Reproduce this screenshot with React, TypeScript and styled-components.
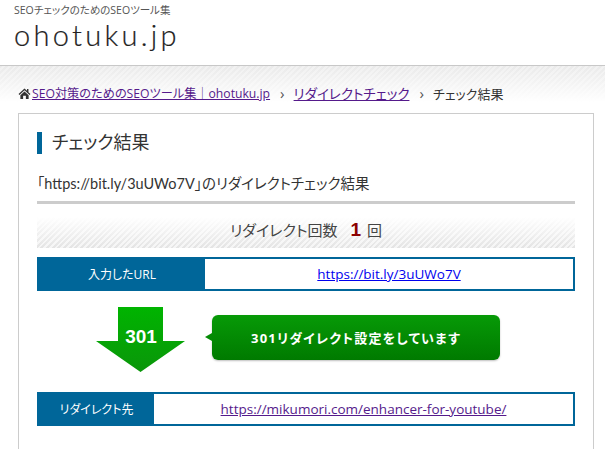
import React from "react";
import styled, { createGlobalStyle } from "styled-components";

const Global = createGlobalStyle`
  html, body { margin: 0; padding: 0; background: #fff; }
  body {
    font-family: "Open Sans", "Noto Sans CJK JP", sans-serif; color: #333; overflow: hidden;
    font-feature-settings: "palt";
  }
  a { color: #551a8b; }
`;
const Page = styled.div`width: 605px; height: 449px; overflow: hidden;`;
const Header = styled.header`
  height: 66px; box-sizing: border-box; padding: 3px 0 0 14px;
  border-bottom: 1px solid #c8c8c8;
`;
const Tagline = styled.div`font-size: 10.5px; line-height: 14px; color: #555;`;
const Logo = styled.div`
  font-family: Lato, sans-serif; font-weight: 300; font-size: 29px; line-height: 34px;
  letter-spacing: 3.3px; color: #222; margin-top: 1px; -webkit-text-stroke: 0.2px #222;
`;
const Main = styled.main`
  height: 383px; box-sizing: border-box; padding: 15px 11px 0 18px;
  background:
    linear-gradient(to bottom, rgba(255,255,255,0) 0, #fff 36px),
    repeating-linear-gradient(135deg, #eaeaea 0 2px, #f1f1f1 2px 4px);
  background-repeat: no-repeat; background-size: 100% 40px;
`;
const Crumbs = styled.nav`
  display: flex; align-items: center; height: 24px; color: #333; white-space: nowrap;
`;
const CrumbLink = styled.a<{ $size: number; $gap?: number }>`
  font-size: ${p => p.$size}px; margin-left: ${p => p.$gap ?? 0}px;
`;
const CrumbCurrent = styled.span`font-size: 13px;`;
const Sep = styled.span`margin: 0 9px 0 10px; color: #555; font-size: 15px; line-height: 15px;`;
const Card = styled.section`
  margin-top: 8px; border: 1px solid #ccc; background: #fff; height: 340px;
  box-sizing: border-box; padding: 18px 18px 0 18px;
`;
const Title = styled.h2`
  margin: 0; height: 22px; line-height: 21px; border-left: 5px solid #006699; padding-left: 10px;
  font-size: 18px; font-weight: 400; color: #333;
`;
const Lead = styled.p`
  margin: 21px 0 0; height: 26px; line-height: 18px; font-family: Lato, "Noto Sans CJK JP", sans-serif;
  font-size: 14.5px; color: #333; border-bottom: 3px solid #ccc;
`;
const Count = styled.div`
  margin-top: 13px; height: 31px; box-sizing: border-box; padding-bottom: 6px;
  display: flex; align-items: center; justify-content: center;
  font-size: 15px; color: #444;
  background:
    linear-gradient(to bottom, #fff, rgba(255,255,255,0)),
    repeating-linear-gradient(135deg, #e4e4e4 0 2px, #f5f5f5 2px 4px);
`;
const CountNum = styled.strong`color: #8b0000; font-size: 19px; margin: 0 6px 0 13px; font-family: "Liberation Sans", sans-serif;`;
const UrlRow = styled.div`
  margin-top: 9px; display: flex; height: 34px; box-sizing: border-box; border: 2px solid #006699;
`;
const UrlLabel = styled.div<{ $w: number }>`
  width: ${p => p.$w}px; flex: none; background: #006699; color: #fff; font-size: 12px;
  display: flex; align-items: center; justify-content: center;
`;
const UrlValue = styled.div`flex: 1; display: flex; align-items: center; justify-content: center; font-size: 13.5px;`;
const BlueLink = styled.a`color: #0000ee;`;
const Flow = styled.div`display: flex; align-items: flex-start; height: 92px; padding-left: 58px;`;
const ArrowBox = styled.div`position: relative; width: 92px; height: 67px; margin-top: 15px; flex: none;`;
const ArrowCode = styled.span`
  position: absolute; left: 0; right: 0; top: 20px; text-align: center; color: #fff;
  font-family: "Liberation Sans", sans-serif; font-weight: 700; font-size: 19px; line-height: 22px;
`;
const Bubble = styled.div`
  position: relative; margin: 24px 0 0 25px; width: 288px; height: 45px; border-radius: 6px;
  background: linear-gradient(to bottom, #079a07, #007a00); color: #fff;
  box-shadow: 0 1px 2px rgba(0,0,0,.25);
  display: flex; align-items: center; justify-content: center; font-weight: 700; font-size: 13px; letter-spacing: 1.2px;
  &::before {
    content: ""; position: absolute; left: -7px; top: 18px;
    border-style: solid; border-width: 4px 7px 4px 0; border-color: transparent #058a05 transparent transparent;
  }
`;

export default function App() {
  return (
    <Page>
      <Global />
      <Header>
        <Tagline>SEOチェックのためのSEOツール集</Tagline>
        <Logo>ohotuku.jp</Logo>
      </Header>
      <Main>
        <Crumbs>
          <svg width="13" height="11" viewBox="0 0 13 12" aria-hidden="true">
            <path d="M6.5 0.5 0 6.5l1 1 5.500-5 5.500 5 1-1-2.200-2V1H9.200v1.900z" fill="#333" />
            <path d="M2 8l4.500-4.200L11 8v4H8V8.500H5V12H2z" fill="#333" />
          </svg>
          <CrumbLink $size={12.2} $gap={1} href="#">SEO対策のためのSEOツール集｜ohotuku.jp</CrumbLink>
          <Sep>›</Sep>
          <CrumbLink $size={13.5} href="#">リダイレクトチェック</CrumbLink>
          <Sep>›</Sep>
          <CrumbCurrent>チェック結果</CrumbCurrent>
        </Crumbs>
        <Card>
          <Title>チェック結果</Title>
          <Lead>「https://bit.ly/3uUWo7V」のリダイレクトチェック結果</Lead>
          <Count>リダイレクト回数<CountNum>1</CountNum>回</Count>
          <UrlRow>
            <UrlLabel $w={166}>入力したURL</UrlLabel>
            <UrlValue><BlueLink href="#">https://bit.ly/3uUWo7V</BlueLink></UrlValue>
          </UrlRow>
          <Flow>
            <ArrowBox>
              <svg width="92" height="67" viewBox="0 0 92 67" aria-hidden="true">
                <defs>
                  <linearGradient id="g" x1="0" y1="0" x2="0" y2="1">
                    <stop offset="0" stopColor="#00b400" />
                    <stop offset="1" stopColor="#0a960a" />
                  </linearGradient>
                </defs>
                <path d="M23 1h45v34h22L45.500 66 1 35h22z" fill="url(#g)" />
              </svg>
              <ArrowCode>301</ArrowCode>
            </ArrowBox>
            <Bubble>301リダイレクト設定をしています</Bubble>
          </Flow>
          <UrlRow>
            <UrlLabel $w={115}>リダイレクト先</UrlLabel>
            <UrlValue><a href="#">https://mikumori.com/enhancer-for-youtube/</a></UrlValue>
          </UrlRow>
        </Card>
      </Main>
    </Page>
  );
}
